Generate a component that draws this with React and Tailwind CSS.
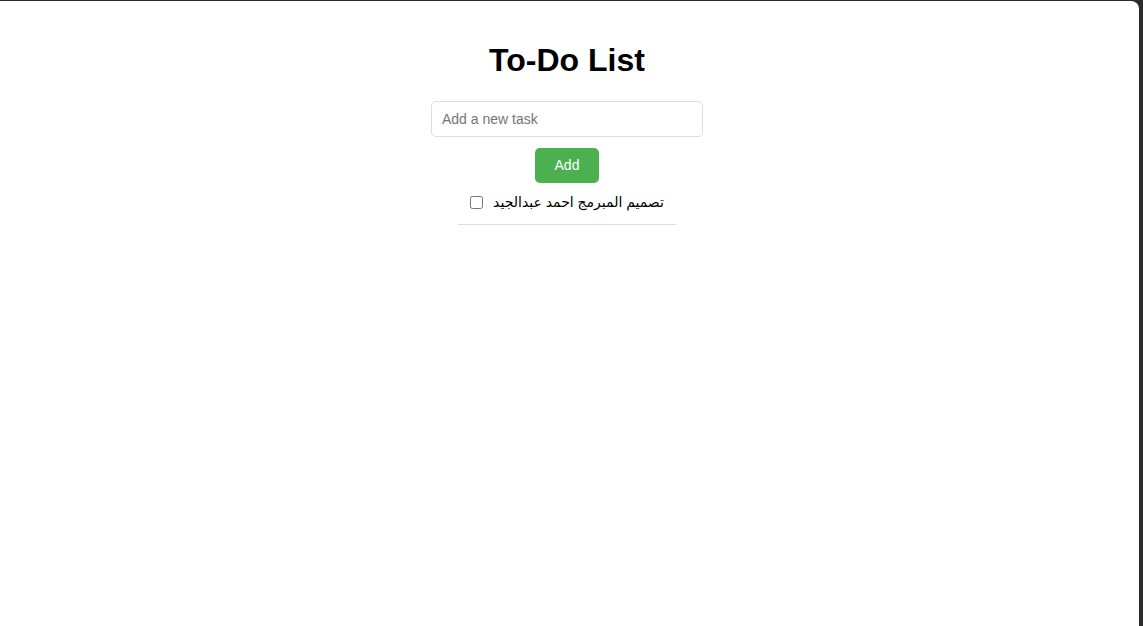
export default function App() {
  return (
    <div className="w-[1143px] h-[626px] bg-[#2b2b2b] pt-px pr-[4px] overflow-hidden">
      <div className="h-full bg-white rounded-tr-[8px] pr-[5px] flex flex-col items-center font-['Liberation_Sans',Arial,sans-serif]">
        <h1 className="mt-[41px] text-[32px] leading-[37px] font-bold text-black">To-Do List</h1>
        <input
          type="text"
          placeholder="Add a new task"
          className="mt-[22px] w-[272px] h-[36px] px-[10px] border border-[#dddddd] rounded-[5px] text-[14px] text-black placeholder:text-[#757575] outline-none"
        />
        <button className="mt-[11px] w-[64px] h-[35px] bg-[#4caf50] text-white text-[14px] rounded-[5px]">
          Add
        </button>
        <ul className="mt-[9px] w-[218px]">
          <li className="flex items-center justify-center gap-[10px] pb-[12px] border-b border-[#dddddd] whitespace-nowrap">
            <input type="checkbox" className="w-[13px] h-[13px] mt-[1px]" />
            <span dir="rtl" className="text-[14px] leading-[20px] text-black whitespace-nowrap font-['Liberation_Sans','DejaVu_Sans',sans-serif]">
              تصميم المبرمج احمد عبدالجيد
            </span>
          </li>
        </ul>
      </div>
    </div>
  );
}
